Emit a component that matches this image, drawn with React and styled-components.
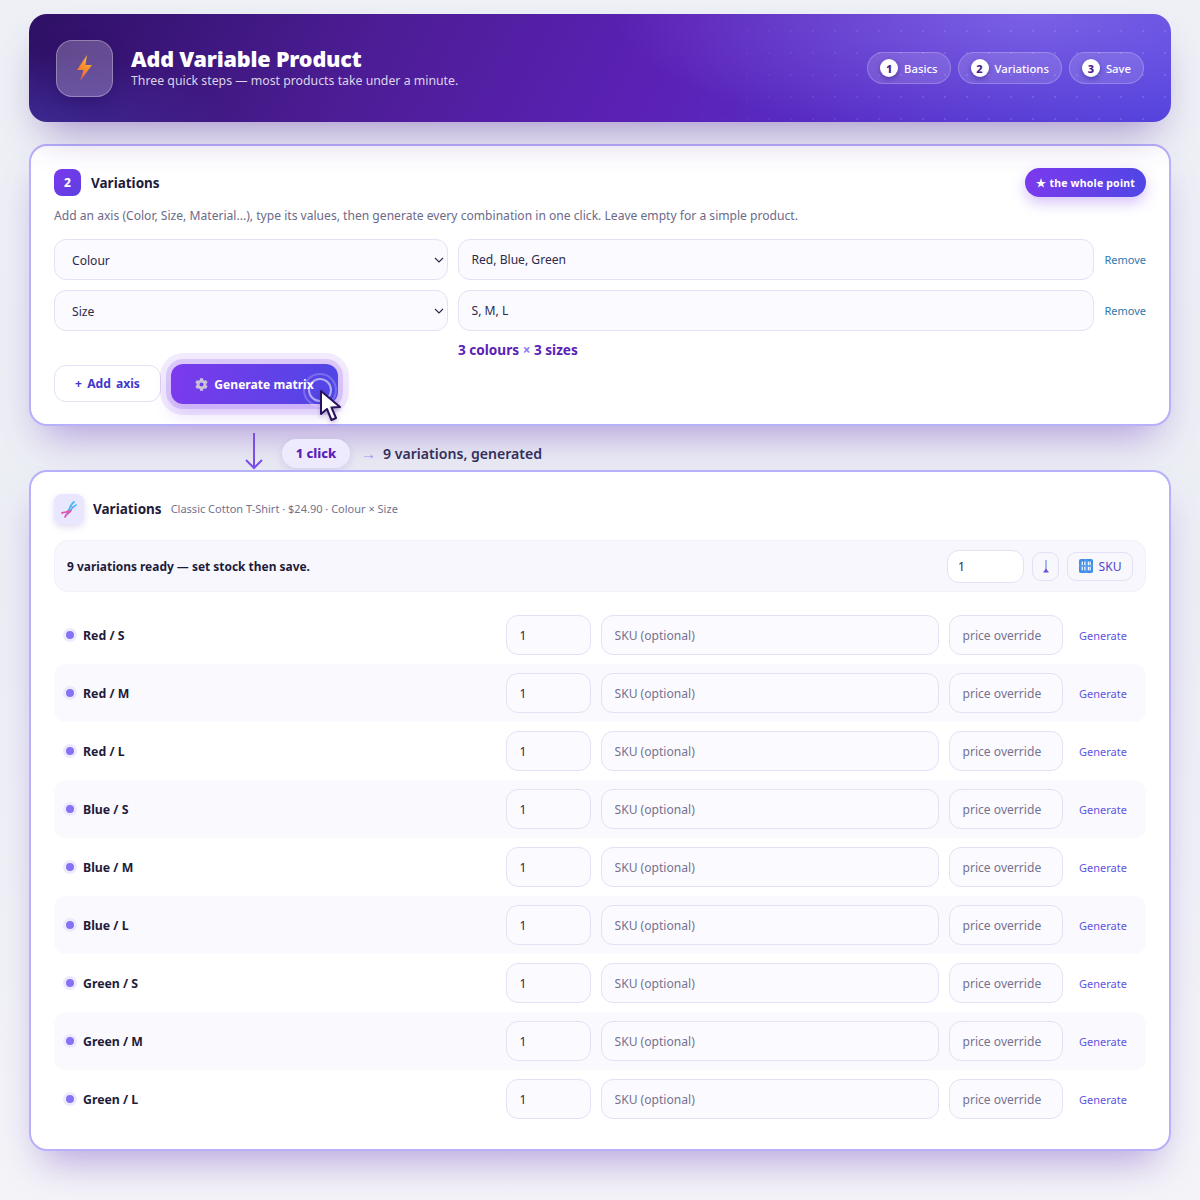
import styled, { createGlobalStyle } from "styled-components";
import { FaCog } from "react-icons/fa";

const GlobalStyle = createGlobalStyle`
  * { box-sizing: border-box; }
  body {
    margin: 0;
    min-height: 1200px;
    background: linear-gradient(180deg, #eef0f6 0%, #eceef5 50%, #f4f4f8 100%);
    font-family: "Noto Sans", "Open Sans", sans-serif;
    color: #1e1b3a;
  }
`;

const chevron =
  "url(\"data:image/svg+xml,%3Csvg xmlns='http://www.w3.org/2000/svg' width='10' height='6' viewBox='0 0 10 6'%3E%3Cpath d='M1 1l4 4 4-4' fill='none' stroke='%232c2a4a' stroke-width='1.1'/%3E%3C/svg%3E\")";

const Page = styled.div`
  padding: 14px 29px 50px;
  display: flex;
  flex-direction: column;
`;

const Hero = styled.header`
  position: relative;
  height: 108px;
  border-radius: 18px;
  padding: 0 27px;
  display: flex;
  align-items: center;
  gap: 18px;
  color: #fff;
  overflow: hidden;
  background:
    radial-gradient(420px 130px at 88% 0%, rgba(139, 115, 240, 0.7), transparent 100%),
    radial-gradient(200px 70px at 0% 100%, rgba(67, 56, 170, 0.6), transparent 100%),
    linear-gradient(118deg, #2e1065 0%, #4c1d95 30%, #5b21b6 55%, #4f3fdc 100%);
  box-shadow: 0 22px 40px -14px rgba(76, 29, 149, 0.45);

  &::before {
    content: "";
    position: absolute;
    inset: 0;
    background-image: radial-gradient(rgba(255, 255, 255, 0.12) 1px, transparent 1.4px);
    background-size: 22px 22px;
    background-position: 3px 6px;
    -webkit-mask-image: linear-gradient(90deg, transparent 55%, #000 80%);
    mask-image: linear-gradient(90deg, transparent 55%, #000 80%);
  }
`;

const HeroIcon = styled.div`
  position: relative;
  width: 57px;
  height: 57px;
  border-radius: 16px;
  display: flex;
  align-items: center;
  justify-content: center;
  background: rgba(255, 255, 255, 0.24);
  border: 1px solid rgba(255, 255, 255, 0.3);
  box-shadow: 0 8px 18px rgba(20, 5, 70, 0.25);
`;

const HeroText = styled.div`
  position: relative;
  flex: 1;
  display: flex;
  flex-direction: column;
  margin-top: -3px;
`;

const HeroTitle = styled.h1`
  margin: 0;
  font-size: 21.6px;
  font-weight: 900;
  line-height: 27px;
  letter-spacing: -0.2px;
`;

const HeroSub = styled.div`
  font-size: 12.3px;
  line-height: 17px;
  color: rgba(255, 255, 255, 0.82);
`;

const Steps = styled.div`
  position: relative;
  display: flex;
  gap: 7px;
`;

const Step = styled.div`
  height: 32px;
  padding: 0 12px;
  border-radius: 16px;
  display: flex;
  align-items: center;
  gap: 6px;
  font-size: 11.3px;
  font-weight: 500;
  background: rgba(255, 255, 255, 0.13);
  border: 1px solid rgba(255, 255, 255, 0.22);
`;

const StepNum = styled.span`
  width: 18px;
  height: 18px;
  border-radius: 50%;
  background: #fff;
  color: #4c1d95;
  font-size: 11px;
  font-weight: 800;
  display: flex;
  align-items: center;
  justify-content: center;
  box-shadow: 0 2px 5px rgba(20, 5, 70, 0.35);
`;

const Panel = styled.section`
  background: #fff;
  border: 2px solid #b7b0fb;
  border-radius: 18px;
  box-shadow: 0 22px 40px -14px rgba(91, 33, 182, 0.42);
`;

const AxisPanel = styled(Panel)`
  margin-top: 22px;
  height: 282px;
  padding: 22px 23px 0;
`;

const PanelHead = styled.div`
  display: flex;
  align-items: center;
  gap: 10px;
  height: 29px;
`;

const NumBadge = styled.span`
  width: 27px;
  height: 27px;
  border-radius: 8px;
  background: linear-gradient(135deg, #7c3aed, #5b3fe0);
  color: #fff;
  font-size: 12px;
  font-weight: 800;
  display: flex;
  align-items: center;
  justify-content: center;
`;

const PanelTitle = styled.h2`
  margin: 0;
  font-size: 13.5px;
  font-weight: 700;
  color: #1e1b3a;
`;

const Pill = styled.span`
  margin-left: auto;
  height: 29px;
  padding: 0 11px;
  border-radius: 15px;
  display: flex;
  align-items: center;
  font-size: 10.5px;
  font-weight: 700;
  letter-spacing: 0.2px;
  color: #fff;
  background: linear-gradient(100deg, #7c3aed, #4f46e5);
  box-shadow: 0 6px 14px rgba(124, 58, 237, 0.3);
`;

const Desc = styled.p`
  margin: 10px 0 15px;
  font-size: 12.1px;
  line-height: 17px;
  color: #6b6a88;
`;

const AxisRow = styled.div`
  display: grid;
  grid-template-columns: 394px 636px 1fr;
  gap: 10px;
  align-items: center;
  margin-bottom: 10px;
`;

const fieldCss = `
  width: 100%;
  border: 1.5px solid #e4e0f5;
  border-radius: 12px;
  background-color: #fbfaff;
  font-family: inherit;
  font-size: 12.1px;
  color: #2c2a4a;
  outline: none;
  &::placeholder { color: #74728f; opacity: 1; }
`;

const Select = styled.select`
  ${fieldCss}
  height: 41px;
  padding: 1px 20px 0 17px;
  appearance: none;
  background-image: ${chevron};
  background-repeat: no-repeat;
  background-position: right 3px center;
`;

const Field = styled.input`
  ${fieldCss}
  height: ${(p) => p.$h || 40}px;
  padding: 0 12.5px;
`;

const TextLink = styled.a`
  font-size: 11px;
  color: ${(p) => p.$color || "#2f78ad"};
  cursor: pointer;
`;

const RemoveLink = styled(TextLink)`
  text-align: right;
`;

const Summary = styled.div`
  margin: 0 0 5px 404px;
  font-size: 13.6px;
  line-height: 18px;
  font-weight: 700;
  color: #5b21b6;

  i {
    font-style: normal;
    color: #8b7cf6;
  }
`;

const ActionRow = styled.div`
  display: flex;
  align-items: center;
  gap: 10px;
`;

const AddButton = styled.button`
  width: 107px;
  height: 37px;
  margin-bottom: 1px;
  border: 1.5px solid #e4e0f5;
  border-radius: 12px;
  background: #fff;
  font-family: inherit;
  font-size: 12.1px;
  font-weight: 700;
  color: #4338ca;
  word-spacing: 2px;
`;

const GenerateWrap = styled.div`
  position: relative;
`;

const GenerateButton = styled.button`
  width: 167px;
  height: 40px;
  border: 0;
  border-radius: 12px;
  display: flex;
  align-items: center;
  justify-content: center;
  gap: 6px;
  font-family: inherit;
  font-size: 12.1px;
  font-weight: 700;
  color: #fff;
  background: linear-gradient(100deg, #7c3aed, #4f46e5);
  box-shadow:
    0 0 0 5px rgba(124, 58, 237, 0.18),
    0 0 0 11px rgba(124, 58, 237, 0.1),
    0 10px 18px rgba(124, 58, 237, 0.2);

  svg { color: #c9c4d8; }
`;

const Ripple = styled.span`
  position: absolute;
  left: ${(p) => 149 - p.$r}px;
  top: ${(p) => 26 - p.$r}px;
  width: ${(p) => p.$r * 2}px;
  height: ${(p) => p.$r * 2}px;
  border-radius: 50%;
  border: ${(p) => p.$w}px solid rgba(255, 255, 255, ${(p) => p.$a});
`;

const Cursor = styled.svg`
  position: absolute;
  left: 148px;
  top: 25px;
  filter: drop-shadow(0 2px 2px rgba(30, 10, 80, 0.25));
`;

const Connector = styled.div`
  height: 44px;
  padding: 10px 0 0 215px;
  display: flex;
  align-items: center;
`;

const DownArrow = styled.svg`
  margin-top: -3px;
`;

const ClickChip = styled.span`
  margin-left: 18px;
  width: 68px;
  height: 29px;
  border-radius: 15px;
  background: #efebfe;
  color: #5b21b6;
  font-size: 12.9px;
  font-weight: 800;
  display: flex;
  align-items: center;
  justify-content: center;
  box-shadow: 0 3px 8px rgba(90, 50, 180, 0.14);
`;

const ThinArrow = styled.span`
  margin: 0 10px 0 11px;
  width: 12px;
  font-size: 15px;
  color: #a78bfa;
  text-align: center;
`;

const ConnectorText = styled.span`
  font-size: 14.1px;
  font-weight: 600;
  color: #33305a;
`;

const MatrixPanel = styled(Panel)`
  padding: 21px 23px 21px;
`;

const MatrixHead = styled.div`
  display: flex;
  align-items: center;
  height: 32px;
`;

const DnaBox = styled.div`
  width: 30px;
  height: 30px;
  margin-right: 9px;
  border-radius: 8px;
  display: flex;
  align-items: center;
  justify-content: center;
  background: #e9e6ff;
  box-shadow: 0 3px 7px rgba(90, 50, 180, 0.18);
`;

const MatrixSub = styled.span`
  margin: 0 0 2px 9px;
  font-size: 11px;
  color: #74728f;
`;

const Toolbar = styled.div`
  margin: 15px 0 14px;
  height: 52px;
  padding: 0 12px;
  display: flex;
  align-items: center;
  gap: 8px;
  border-radius: 14px;
  background: #f8f7fe;
  border: 1px solid #f2f0fc;
`;

const ToolbarText = styled.strong`
  flex: 1;
  font-size: 11.95px;
  font-weight: 700;
  color: #1e1b3a;
`;

const StockField = styled(Field)`
  width: 77px;
  background: #fff;
  padding: 0 10px;
`;

const ToolButton = styled.button`
  height: 29px;
  width: ${(p) => p.$w}px;
  border: 1.5px solid #e4e0f5;
  border-radius: 9px;
  background: #f8f8fc;
  font-family: inherit;
  font-size: 12.1px;
  color: #4f46c8;
  display: flex;
  align-items: center;
  justify-content: center;
  gap: 6px;
  padding: 0;
`;

const Row = styled.div`
  height: 58px;
  padding: 0 9px;
  display: grid;
  grid-template-columns: 1fr 85px 338px 114px 64px;
  gap: 10px;
  align-items: center;
  border-radius: 12px;
  background: ${(p) => (p.$striped ? "#faf9fe" : "transparent")};
`;

const RowName = styled.div`
  display: flex;
  align-items: center;
  gap: 6px;
  font-size: 12.3px;
  font-weight: 700;
  color: #1e1b3a;
`;

const Dot = styled.span`
  width: 8px;
  height: 8px;
  margin: 3px;
  border-radius: 50%;
  background: #8474f5;
  box-shadow: 0 0 0 3px #eeeafd;
`;

const GenerateLink = styled(TextLink)`
  padding-left: 6px;
`;

const names = ["Red / S", "Red / M", "Red / L", "Blue / S", "Blue / M", "Blue / L", "Green / S", "Green / M", "Green / L"];

const steps = [
  ["1", "Basics"],
  ["2", "Variations"],
  ["3", "Save"],
];

function SkuIcon() {
  const cells = [[3, 3], [6, 3], [10, 3], [12, 3], [3, 9], [6, 9], [10, 9], [12, 9]];
  return (
    <svg width="14" height="14" viewBox="0 0 16 16">
      <rect width="16" height="16" rx="2" fill="#3f8ee8" />
      <path d="M8 0 L8 16 M0 8 L16 8" stroke="#7db6f2" strokeWidth="0.8" />
      {cells.map(([x, y]) => (
        <rect key={`${x}-${y}`} x={x} y={y} width="1.4" height="4" fill="#fff" />
      ))}
    </svg>
  );
}

export default function App() {
  return (
    <>
      <GlobalStyle />
      <Page>
        <Hero>
          <HeroIcon>
            <svg width="18" height="28" viewBox="0 0 18 28">
              <defs>
                <linearGradient id="bolt" x1="0.7" y1="0" x2="0.3" y2="1">
                  <stop offset="0" stopColor="#fbbf24" />
                  <stop offset="1" stopColor="#ef5a3c" />
                </linearGradient>
              </defs>
              <path d="M11 1 L1 16 L7.5 16 L4 27 L16 11 L9.5 11 Z" fill="url(#bolt)" />
            </svg>
          </HeroIcon>
          <HeroText>
            <HeroTitle>Add Variable Product</HeroTitle>
            <HeroSub>Three quick steps — most products take under a minute.</HeroSub>
          </HeroText>
          <Steps>
            {steps.map(([n, label]) => (
              <Step key={n}>
                <StepNum>{n}</StepNum>
                {label}
              </Step>
            ))}
          </Steps>
        </Hero>

        <AxisPanel>
          <PanelHead>
            <NumBadge>2</NumBadge>
            <PanelTitle>Variations</PanelTitle>
            <Pill>★ the whole point</Pill>
          </PanelHead>
          <Desc>
            Add an axis (Color, Size, Material...), type its values, then generate every combination in one click. Leave
            empty for a simple product.
          </Desc>
          <AxisRow>
            <Select defaultValue="Colour">
              <option>Colour</option>
              <option>Size</option>
            </Select>
            <Field $h={41} defaultValue="Red, Blue, Green" />
            <RemoveLink>Remove</RemoveLink>
          </AxisRow>
          <AxisRow>
            <Select defaultValue="Size">
              <option>Colour</option>
              <option>Size</option>
            </Select>
            <Field $h={41} defaultValue="S, M, L" />
            <RemoveLink>Remove</RemoveLink>
          </AxisRow>
          <Summary>
            3 colours <i>×</i> 3 sizes
          </Summary>
          <ActionRow>
            <AddButton>+ Add axis</AddButton>
            <GenerateWrap>
              <GenerateButton>
                <FaCog size={13} />
                Generate matrix
              </GenerateButton>
              <Ripple $r={17} $w={2} $a={0.22} />
              <Ripple $r={12} $w={2} $a={0.55} />
              <Cursor width="24" height="34" viewBox="0 0 24 34">
                <path
                  d="M2 2 L2 25 L8 20 L12.5 31 L17 29 L12.5 18.5 L21 18 Z"
                  fill="#fff"
                  stroke="#2a1263"
                  strokeWidth="2"
                  strokeLinejoin="round"
                />
              </Cursor>
            </GenerateWrap>
          </ActionRow>
        </AxisPanel>

        <Connector>
          <DownArrow width="20" height="37" viewBox="0 0 20 37">
            <path d="M10 0 L10 35 M2 27 L10 35 L18 27" fill="none" stroke="#7c4fe8" strokeWidth="2" />
          </DownArrow>
          <ClickChip>1 click</ClickChip>
          <ThinArrow>→</ThinArrow>
          <ConnectorText>9 variations, generated</ConnectorText>
        </Connector>

        <MatrixPanel>
          <MatrixHead>
            <DnaBox>
              <svg width="18" height="18" viewBox="0 0 18 18" fill="none" strokeWidth="1.7" strokeLinecap="round">
                <path d="M2 13 C5 11 7 14 9 10" stroke="#ec4899" />
                <path d="M5 17 C6 13 10 14 11 10" stroke="#ec4899" />
                <path d="M9 10 C10 7 11 4 14 2" stroke="#38bdf8" />
                <path d="M11 10 C12 7 14 7 16 5" stroke="#38bdf8" />
                <path d="M6 12.5 L7 15 M11 6 L13 7.5" stroke="#a78bfa" strokeWidth="1.2" />
              </svg>
            </DnaBox>
            <PanelTitle>Variations</PanelTitle>
            <MatrixSub>Classic Cotton T-Shirt · $24.90 · Colour × Size</MatrixSub>
          </MatrixHead>
          <Toolbar>
            <ToolbarText>9 variations ready — set stock then save.</ToolbarText>
            <StockField $h={33} defaultValue="1" />
            <ToolButton $w={27}>
              <svg width="8" height="13" viewBox="0 0 8 13">
                <path d="M4 0 L4 10" stroke="#6a8fd8" strokeWidth="1.2" />
                <path d="M1 12.5 L7 12.5 L4 8.5 Z" fill="#6a4fd0" />
              </svg>
            </ToolButton>
            <ToolButton $w={66}>
              <SkuIcon />
              SKU
            </ToolButton>
          </Toolbar>
          {names.map((name, i) => (
            <Row key={name} $striped={i % 2 === 1}>
              <RowName>
                <Dot />
                {name}
              </RowName>
              <Field defaultValue="1" />
              <Field placeholder="SKU (optional)" />
              <Field placeholder="price override" />
              <GenerateLink $color="#5f55e0">Generate</GenerateLink>
            </Row>
          ))}
        </MatrixPanel>
      </Page>
    </>
  );
}
